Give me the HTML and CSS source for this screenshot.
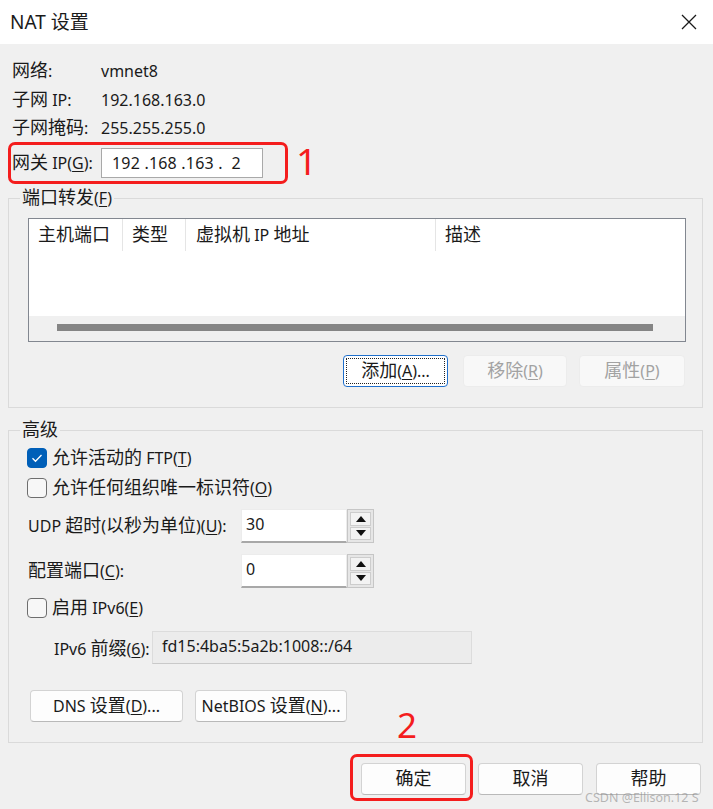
FILE: index.html
```html
<!DOCTYPE html>
<html lang="zh-CN">
<head>
<meta charset="utf-8">
<title>NAT 设置</title>
<link rel="stylesheet" href="styles.css">
</head>
<body>
<div class="titlebar">
  <div class="title">NAT <span class="c">设置</span></div>
  <svg class="close" viewBox="0 0 16 16" width="16" height="16"><path d="M1 1L15 15M15 1L1 15" stroke="#1a1a1a" stroke-width="1.3" fill="none"/></svg>
</div>

<div class="info">
  <div class="row"><div class="lbl"><span class="c">网络</span>:</div><div>vmnet8</div></div>
  <div class="row"><div class="lbl"><span class="c">子网</span> IP:</div><div>192.168.163.0</div></div>
  <div class="row last"><div class="lbl"><span class="c">子网掩码</span>:</div><div>255.255.255.0</div></div>
</div>

<div class="gw-line">
  <div class="redbox">
    <div class="lbl"><span class="c">网关</span> IP(<u>G</u>):</div>
    <div class="ipbox">192 .168 .163 .  2</div>
  </div>
  <div class="mark">1</div>
</div>

<fieldset class="group g1">
  <legend><span class="c">端口转发</span>(<u>F</u>)</legend>
  <div class="gbody">
    <div class="lv">
      <div class="lv-head">
        <div class="col col1"><span class="c">主机端口</span></div>
        <div class="col col2"><span class="c">类型</span></div>
        <div class="col col3"><span class="c">虚拟机</span> IP <span class="c">地址</span></div>
        <div class="col col4"><span class="c">描述</span></div>
      </div>
      <div class="lv-body"></div>
      <div class="lv-scroll"><div class="thumb"></div></div>
    </div>
    <div class="btnrow">
      <div class="btn focus b-add"><span class="bt"><span class="c">添加</span>(<u>A</u>)...</span></div>
      <div class="btn disabled b-rem"><span class="bt"><span class="c">移除</span>(<u>R</u>)</span></div>
      <div class="btn disabled b-prop"><span class="bt"><span class="c">属性</span>(<u>P</u>)</span></div>
    </div>
  </div>
</fieldset>

<fieldset class="group g2">
  <legend><span class="c">高级</span></legend>
  <div class="gbody">
    <div class="cbrow">
      <div class="cb checked"><svg viewBox="0 0 20 20" width="20" height="20"><path d="M5.5 10.2L8.5 13.2L14.5 7" stroke="#fff" stroke-width="1.3" fill="none"/></svg></div>
      <div><span class="c">允许活动的</span> FTP(<u>T</u>)</div>
    </div>
    <div class="cbrow r2">
      <div class="cb"></div>
      <div><span class="c">允许任何组织唯一标识符</span>(<u>O</u>)</div>
    </div>
    <div class="numrow r3">
      <div class="nlbl">UDP <span class="c">超时</span>(<span class="c">以秒为单位</span>)(<u>U</u>):</div>
      <div class="numin">30</div>
      <div class="spin">
        <div class="sb"><svg viewBox="0 0 10 6" width="10" height="6"><path d="M0 6L5 0L10 6Z" fill="#111"/></svg></div>
        <div class="sb"><svg viewBox="0 0 10 6" width="10" height="6"><path d="M0 0L10 0L5 6Z" fill="#111"/></svg></div>
      </div>
    </div>
    <div class="numrow r4">
      <div class="nlbl"><span class="c">配置端口</span>(<u>C</u>):</div>
      <div class="numin">0</div>
      <div class="spin">
        <div class="sb"><svg viewBox="0 0 10 6" width="10" height="6"><path d="M0 6L5 0L10 6Z" fill="#111"/></svg></div>
        <div class="sb"><svg viewBox="0 0 10 6" width="10" height="6"><path d="M0 0L10 0L5 6Z" fill="#111"/></svg></div>
      </div>
    </div>
    <div class="cbrow r5">
      <div class="cb"></div>
      <div><span class="c">启用</span> IPv6(<u>E</u>)</div>
    </div>
    <div class="pfxrow">
      <div class="plbl">IPv6 <span class="c">前缀</span>(<u>6</u>):</div>
      <div class="pfx">fd15:4ba5:5a2b:1008::/64</div>
    </div>
    <div class="dnsrow">
      <div class="btn b-dns"><span class="bt">DNS <span class="c">设置</span>(<u>D</u>)...</span></div>
      <div class="btn b-nb"><span class="bt">NetBIOS <span class="c">设置</span>(<u>N</u>)...</span></div>
    </div>
  </div>
</fieldset>

<div class="bottom">
  <div class="redwrap"><div class="btn b-ok"><span class="bt"><span class="c">确定</span></span></div></div>
  <div class="btn b-cancel"><span class="bt"><span class="c">取消</span></span></div>
  <div class="btn b-help"><span class="bt"><span class="c">帮助</span></span></div>
</div>

<div class="mark2">2</div>
<div class="watermark">CSDN @Ellison.12 S</div>
</body>
</html>
```

FILE: styles.css
```css
* { box-sizing: border-box; margin: 0; padding: 0; }
html, body { width: 713px; height: 809px; overflow: hidden; }
body {
  position: relative;
  background: #f0f0f0;
  font-family: "Noto Sans", "Noto Sans CJK SC", sans-serif;
  font-size: 16px;
  line-height: 22px;
  color: #1a1a1a;
}
.c { font-family: "Noto Sans CJK SC", "Noto Sans", sans-serif; font-size: 18px; line-height: 18px; }
u { text-decoration: underline; text-underline-offset: 2px; text-decoration-thickness: 1px; }

.titlebar {
  height: 44px;
  background: #fff;
  display: flex;
  align-items: center;
  justify-content: space-between;
  padding: 0 16px 0 10px;
}
.title { font-size: 19px; line-height: 24px; }
.title .c { font-size: 19px; line-height: 19px; }
.close { display: block; }

.info { padding: 12px 0 0 12px; }
.row { display: flex; align-items: center; height: 29px; }
.row.last { height: 28px; }
.lbl { width: 89px; flex: none; white-space: nowrap; }

.gw-line { display: flex; align-items: center; margin-left: 8px; }
.redbox {
  width: 280px;
  height: 42px;
  border: 3px solid #f41d1d;
  border-radius: 7px;
  padding-left: 1px;
  display: flex;
  align-items: center;
}
.ipbox {
  width: 162px;
  height: 30px;
  background: #fff;
  border: 1px solid #a9a9a9;
  padding: 3px 0 0 10px;
  white-space: pre;
  letter-spacing: 0.2px;
}
.mark {
  margin-left: 8px;
  font-size: 37px;
  line-height: 38px;
  color: #f41d1d;
  margin-top: -5px;
}

.group {
  border: 1px solid #dadada;
  margin: 3px 10px 0 8px;
  padding: 0;
  min-width: 0;
}
.group legend { margin-left: 11px; padding: 0 2px; line-height: 22px; height: 22px; }
.g1 .gbody { padding: 9px 16px 20px 19px; }
.g2 { margin-top: 11px; }
.g2 .gbody { padding: 6px 16px 20px 19px; }

.lv {
  height: 124px;
  border: 1px solid #828790;
  background: #fff;
  display: flex;
  flex-direction: column;
}
.lv-head { display: flex; height: 32px; flex: none; }
.col { border-right: 1px solid #e5e5e5; padding: 5px 0 0 9px; white-space: nowrap; }
.col1 { width: 94px; }
.col2 { width: 63px; }
.col3 { width: 250px; padding-left: 10px; }
.col4 { flex: 1; border-right: 0; }
.lv-body { flex: 1; }
.lv-scroll { height: 25px; flex: none; background: #f0f0f0; padding: 8px 32px 0 28px; }
.thumb { height: 7px; background: #858585; }

.btn {
  height: 32px;
  border: 1px solid #d3d3d3;
  border-bottom-color: #b9b9b9;
  border-radius: 4px;
  background: #fdfdfd;
  display: flex;
  align-items: center;
  justify-content: center;
  white-space: nowrap;
  color: #1a1a1a;
}
.bt { display: block; line-height: 22px; }
.btn.focus {
  border: 1px solid #1f6fcc;
  background: #fff;
  outline: 1px dotted #222;
  outline-offset: -4px;
}
.btn.disabled {
  background: #f8f8f8;
  border: 1px solid #ececec;
  color: #a2a2a2;
}
.btnrow { display: flex; justify-content: flex-end; margin-top: 13px; padding-right: 1px; }
.b-add { width: 105px; }
.b-rem { width: 104px; margin-left: 15px; }
.b-prop { width: 106px; margin-left: 12px; }

.cbrow { display: flex; align-items: center; height: 22px; }
.cbrow.r2 { margin-top: 8px; }
.cbrow.r5 { margin-top: 9px; }
.cb {
  width: 20px;
  height: 20px;
  border: 1px solid #6e6e6e;
  border-radius: 4px;
  background: #f7f7f7;
  margin-left: -1px;
  margin-right: 5px;
  flex: none;
}
.cb svg { display: block; margin: -1px; }
.cb.checked { background: #005fb8; border-color: #005fb8; }

.numrow { display: flex; align-items: center; height: 34px; }
.numrow.r3 { margin-top: 10px; }
.numrow.r4 { margin-top: 11px; }
.nlbl { width: 213px; flex: none; white-space: nowrap; }
.numin {
  width: 106px;
  height: 34px;
  background: #fff;
  border: 1px solid #ececec;
  border-bottom: 2px solid #a8a8a8;
  padding: 3px 0 0 4px;
}
.spin {
  width: 27px;
  height: 34px;
  border: 1px solid #c6c6c6;
  background: #e6e6e6;
  padding: 2px;
  display: flex;
  flex-direction: column;
  gap: 1px;
}
.sb {
  flex: 1;
  background: #f3f3f3;
  border: 1px solid #cdcdcd;
  display: flex;
  align-items: center;
  justify-content: center;
}
.sb svg { display: block; }

.pfxrow { display: flex; align-items: center; margin-top: 12px; padding-left: 26px; }
.plbl { width: 98px; flex: none; white-space: nowrap; padding-top: 3px; }
.pfx {
  width: 320px;
  height: 33px;
  background: #ececec;
  border: 1px solid #dcdcdc;
  border-bottom-color: #c9c9c9;
  padding: 3px 0 0 9px;
}

.dnsrow { display: flex; margin-top: 26px; padding-left: 2px; }
.b-dns { width: 153px; }
.b-nb { width: 152px; margin-left: 12px; }

.bottom { display: flex; justify-content: flex-end; align-items: flex-start; margin-top: 11px; padding-right: 12px; }
.redwrap {
  border: 3px solid #f41d1d;
  border-radius: 7px;
  padding: 6px 4px 3px 8px;
}
.b-ok { width: 105px; }
.b-cancel { width: 105px; margin-left: 5px; margin-top: 9px; }
.b-help { width: 105px; margin-left: 13px; margin-top: 9px; }

.mark2 {
  position: absolute;
  left: 397px;
  top: 707px;
  font-size: 35px;
  line-height: 35px;
  color: #f41d1d;
}
.watermark {
  position: absolute;
  left: 585px;
  top: 791px;
  font-size: 12.5px;
  line-height: 13px;
  color: rgba(140, 140, 140, 0.6);
  white-space: nowrap;
}
```
